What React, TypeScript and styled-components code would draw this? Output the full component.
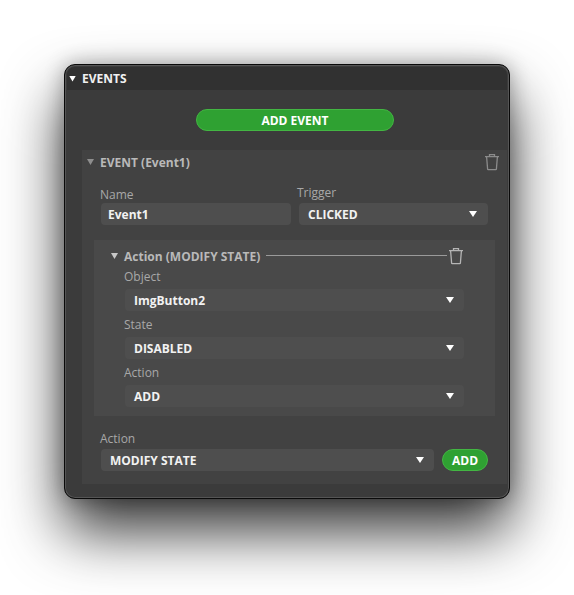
import React from 'react';
import styled, {createGlobalStyle} from 'styled-components';

const Global = createGlobalStyle`
  html, body {
    margin: 0;
    background: #fff;
    overflow: hidden;
  }
  body {
    font-family: "Open Sans", "Liberation Sans", sans-serif;
    font-size: 12px;
  }
`

const Page = styled.div`
  width: 574px;
  height: 595px;
  padding: 64px 0 0 64px;
  box-sizing: border-box;
`

const Panel = styled.div`
  width: 446px;
  height: 435px;
  box-sizing: border-box;
  background: #3b3b3b;
  border: 1px solid #0a0a0a;
  border-radius: 11px;
  box-shadow: inset 0 0 0 1px #555, 0 32px 60px rgba(0, 0, 0, .8), 0 0 20px rgba(0, 0, 0, .3);
  padding: 2px 2px 12px 2px;
  display: flex;
  flex-direction: column;
  overflow: hidden;
`

const PanelHeader = styled.div`
  height: 23px;
  flex: none;
  background: #313131;
  display: flex;
  align-items: center;
  gap: 6px;
  padding-left: 2px;
  color: #f0f0f0;
  font-weight: 700;
  font-size: 12px;
  border-radius: 8px 8px 0 0;
`

const Arrow = styled.span<{$color?: string; $small?: boolean}>`
  width: ${p => p.$small ? '7px' : '8px'};
  height: 6px;
  flex: none;
  background: ${p => p.$color || '#fff'};
  clip-path: polygon(0 0, 100% 0, 50% 100%);
`

const AddEventRow = styled.div`
  display: flex;
  justify-content: center;
  padding: 19px 0 19px 16px;
`

const GreenButton = styled.button<{$wide?: boolean}>`
  width: ${p => p.$wide ? '198px' : '46px'};
  height: 22px;
  flex: none;
  padding: 2px 0 0;
  border: 1px solid #43b643;
  border-radius: 11px;
  background: #2fa132;
  color: #fff;
  font-family: inherit;
  font-weight: 700;
  font-size: 12px;
  line-height: 18px;
`

const EventSection = styled.div`
  margin-left: 15px;
  height: 334px;
  background: #424242;
  display: flex;
  flex-direction: column;
`

const EventTitle = styled.div`
  height: 24px;
  display: flex;
  align-items: center;
  padding: 0 7px 0 5px;
  gap: 6px;
  color: #b9b9b9;
  font-weight: 700;
  font-size: 12px;
  > svg {
    margin-left: auto;
  }
`

const FieldRow = styled.div`
  display: flex;
  gap: 8px;
  padding: 13px 0 0 18px;
`

const Field = styled.div<{$width: number}>`
  width: ${p => p.$width}px;
`

const Label = styled.div<{$up?: boolean}>`
  color: #a8a8a8;
  font-size: 12px;
  line-height: 16px;
  height: 16px;
  margin-top: ${p => p.$up ? '-2px' : '0'};
  margin-bottom: ${p => p.$up ? '2px' : '0'};
  margin-left: ${p => p.$up ? '-2px' : '0'};
`

const Select = styled.div`
  height: 22px;
  box-sizing: border-box;
  background: #4e4e4e;
  border-radius: 4px;
  display: flex;
  align-items: center;
  justify-content: space-between;
  color: #f2f2f2;
  font-weight: 700;
  font-size: 12px;
`

const NameInput = styled(Select)`
  margin-left: 1px;
  padding: 0 7px;
`

const TriggerSelect = styled(Select)`
  padding: 0 11px 0 9px;
`

const ActionBlock = styled.div`
  margin: 15px 12px 0 12px;
  height: 176px;
  background: #494949;
  padding: 5px 0 0 17px;
  box-sizing: border-box;
`

const ActionTitle = styled.div`
  height: 22px;
  display: flex;
  align-items: center;
  gap: 6px;
  color: #b9b9b9;
  font-weight: 700;
  font-size: 12px;
  padding-right: 31px;
`

const Line = styled.div`
  flex: 1;
  height: 1px;
  margin: -1px -5px 0 0;
  background: #9a9a9a;
`

const ActionFields = styled.div`
  padding: 2px 0 0 13px;
`

const ActionGroup = styled.div`
  height: 48px;
`

const ActionSelect = styled(Select)`
  width: 339px;
  margin: 4px 0 0 1px;
  padding: 0 10px 0 9px;
`

const BottomRow = styled.div`
  padding: 15px 0 0 18px;
`

const BottomControls = styled.div`
  display: flex;
  gap: 8px;
  align-items: center;
  margin-top: 2px;
`

const BottomSelect = styled(Select)`
  width: 333px;
  margin-left: 1px;
  padding: 0 10px 0 9px;
`

const Trash = ({color}: {color: string}) => (
  <svg width="16" height="18" viewBox="0 0 16 18" fill="none" stroke={color} strokeWidth="1.3">
    <path d="M1 3.6h14"/>
    <path d="M5.5 3.4V1.7h5v1.7"/>
    <path d="M2.6 3.8l1 12.2c0 .4.3.7.7.7h7.4c.4 0 .7-.3.7-.7l1-12.2"/>
  </svg>
)

function App() {
  return (
    <Page>
      <Global/>
      <Panel>
        <PanelHeader>
          <Arrow $small/>
          <span>EVENTS</span>
        </PanelHeader>
        <AddEventRow>
          <GreenButton $wide>ADD EVENT</GreenButton>
        </AddEventRow>
        <EventSection>
          <EventTitle>
            <Arrow $small $color="#8e8e8e"/>
            <span>EVENT (Event1)</span>
            <Trash color="#8c8c8c"/>
          </EventTitle>
          <FieldRow>
            <Field $width={191}>
              <Label>Name</Label>
              <NameInput>Event1</NameInput>
            </Field>
            <Field $width={189}>
              <Label $up>Trigger</Label>
              <TriggerSelect>CLICKED<Arrow/></TriggerSelect>
            </Field>
          </FieldRow>
          <ActionBlock>
            <ActionTitle>
              <Arrow $small $color="#c8c8c8"/>
              <span>Action (MODIFY STATE)</span>
              <Line/>
              <Trash color="#b5b5b5"/>
            </ActionTitle>
            <ActionFields>
              <ActionGroup>
                <Label>Object</Label>
                <ActionSelect>ImgButton2<Arrow/></ActionSelect>
              </ActionGroup>
              <ActionGroup>
                <Label>State</Label>
                <ActionSelect>DISABLED<Arrow/></ActionSelect>
              </ActionGroup>
              <ActionGroup>
                <Label>Action</Label>
                <ActionSelect>ADD<Arrow/></ActionSelect>
              </ActionGroup>
            </ActionFields>
          </ActionBlock>
          <BottomRow>
            <Label>Action</Label>
            <BottomControls>
              <BottomSelect>MODIFY STATE<Arrow/></BottomSelect>
              <GreenButton>ADD</GreenButton>
            </BottomControls>
          </BottomRow>
        </EventSection>
      </Panel>
    </Page>
  );
}

export default App;
